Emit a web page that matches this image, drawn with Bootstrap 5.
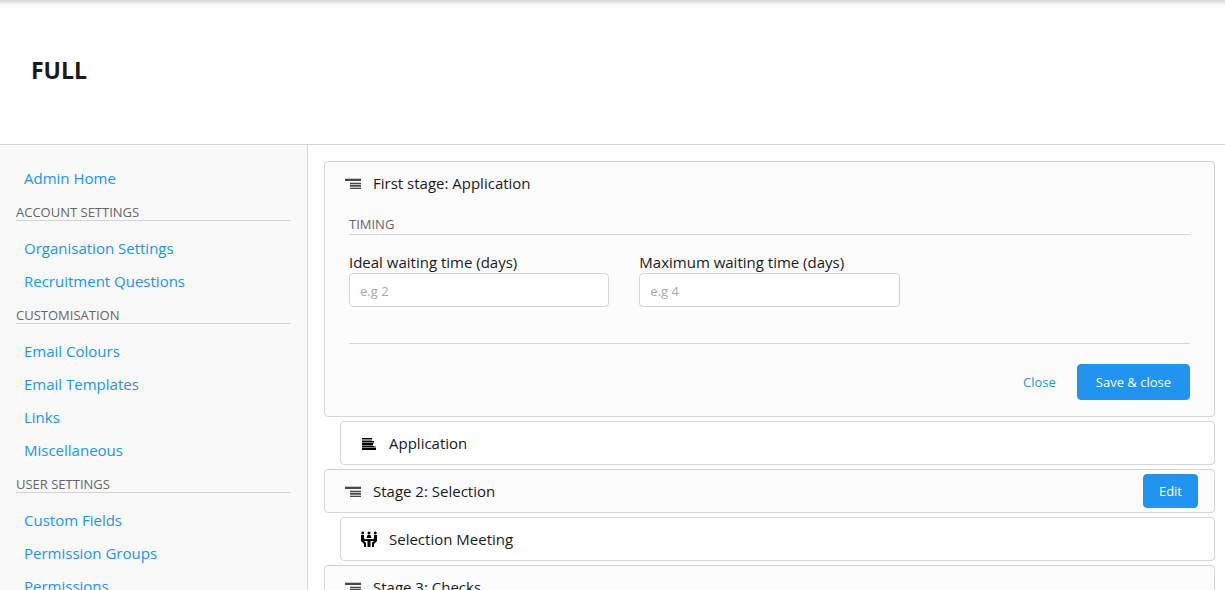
<!DOCTYPE html>
<html lang="en">
<head>
<meta charset="utf-8">
<meta name="viewport" content="width=device-width, initial-scale=1">
<title>Admin – Stages</title>
<link href="https://cdn.jsdelivr.net/npm/bootstrap@5.3.0/dist/css/bootstrap.min.css" rel="stylesheet">
<style>
  :root { --line: #d5d5d5; --blue: #2094ee; }
  body { font-family: "Open Sans", "Noto Sans", sans-serif; font-size: 15px; line-height: 21px; color: #1a1a1a; }
  .page-head { height: 145px; padding: 0 31px 4px; border-bottom: 1px solid var(--line); box-shadow: inset 0 6px 5px -4px #ccc; }
  .page-head h1 { font-size: 23px; line-height: 28px; font-weight: 700; }
  .side { flex: 0 0 308px; padding: 17px 16px; background: #f9f9f9; border-right: 1px solid var(--line); }
  .side .nav-link { padding: 6px 8px; color: var(--blue); }
  .section-title { font-size: 13px; line-height: 16px; font-weight: 400; color: #666; text-transform: uppercase; border-bottom: 1px solid var(--line); }
  .side .section-title { margin: 9px 0 11px; }
  .stage-body .section-title { padding-bottom: 2px; }
  .stages { padding: 16px 10px 0 16px; gap: 4px; }
  .stage { border: 1px solid var(--line); border-radius: 4px; background: #fcfcfc; }
  .step { margin-left: 16px; background: #fff; }
  .stage-head { height: 42px; padding: 0 16px 0 20px; gap: 12px; }
  .stage-head svg { width: 16px; height: 16px; flex: none; }
  .stage-body { padding: 12px 24px 16px; }
  .fields { --bs-gutter-x: 30px; padding: 17px 0 36px; }
  .stage .form-control { height: 34px; padding: 7px 10px 5px; font-size: 13px; border-color: var(--line); border-radius: 4px; }
  .stage .form-control::placeholder { color: #aaa; }
  .actions { border-top: 1px solid var(--line); padding-top: 20px; gap: 3px; }
  .stage .btn { font-size: 13px; line-height: 20px; padding: 7px 17px; border-radius: 4px; }
  .stage .btn-primary { padding: 7px 18px; }
  .stage .btn-edit { padding: 6px 15px; }
  .btn-primary { --bs-btn-bg: var(--blue); --bs-btn-border-color: var(--blue); }
  .btn-link { color: var(--blue); }
</style>
</head>
<body>
<svg class="d-none" aria-hidden="true">
  <symbol id="i-stage" viewBox="0 0 16 16"><path fill="#c8c8c8" d="M0 3h16v1H0zM5 7h11v7H5z"/><path fill="#484848" d="M0 4h16v2H0zM5 8h11v1H5zM5 10h11v1H5zM5 13h11v1H5z"/><path fill="#777" d="M5 11h11v1H5z"/></symbol>
  <symbol id="i-form" viewBox="0 0 16 16"><path fill="#888" d="M1 3h10v3h2v3h-1v2h3v4H1z"/><path d="M1 3h10v1H1zM1 6h12v1H1zM1 8h11v2H1zM1 11h12v1H1zM1 13h14v2H1z"/></symbol>
  <symbol id="i-meet" viewBox="0 0 16 16"><circle cx="1.7" cy="2" r="1.4"/><circle cx="8" cy="2" r="1.5"/><circle cx="14.3" cy="2" r="1.4"/><path d="M0 4h3v3.500l2 1v1.500H3l2 1.500V16H3v-3L0 10zM16 4h-3v3.500l-2 1v1.500h2l-2 1.500V16h2v-3l3-3zM6.500 4h3l1 3h-5zM5 8h6v2H9.500v6h-3v-6H5z"/></symbol>
</svg>
<div class="vh-100 overflow-hidden d-flex flex-column">
  <header class="page-head flex-shrink-0 d-flex align-items-center"><h1 class="m-0">FULL</h1></header>
  <div class="d-flex flex-grow-1">
    <nav class="side nav flex-column flex-nowrap" aria-label="Admin">
      <a class="nav-link" href="#">Admin Home</a>
      <h2 class="section-title">Account settings</h2>
      <a class="nav-link" href="#">Organisation Settings</a>
      <a class="nav-link" href="#">Recruitment Questions</a>
      <h2 class="section-title">Customisation</h2>
      <a class="nav-link" href="#">Email Colours</a>
      <a class="nav-link" href="#">Email Templates</a>
      <a class="nav-link" href="#">Links</a>
      <a class="nav-link" href="#">Miscellaneous</a>
      <h2 class="section-title">User settings</h2>
      <a class="nav-link" href="#">Custom Fields</a>
      <a class="nav-link" href="#">Permission Groups</a>
      <a class="nav-link" href="#">Permissions</a>
    </nav>
    <main class="stages flex-grow-1 d-flex flex-column">
      <form class="stage">
        <div class="stage-head d-flex align-items-center"><svg aria-hidden="true"><use href="#i-stage"/></svg>First stage: Application</div>
        <div class="stage-body">
          <h3 class="section-title m-0">Timing</h3>
          <div class="fields row">
            <div class="col-4"><label class="d-block" for="ideal">Ideal waiting time (days)</label><input class="form-control" id="ideal" placeholder="e.g 2"></div>
            <div class="col-4"><label class="d-block" for="max">Maximum waiting time (days)</label><input class="form-control" id="max" placeholder="e.g 4"></div>
          </div>
          <div class="actions d-flex justify-content-end">
            <button type="button" class="btn btn-link text-decoration-none">Close</button>
            <button type="button" class="btn btn-primary">Save &amp; close</button>
          </div>
        </div>
      </form>
      <div class="stage step"><div class="stage-head d-flex align-items-center"><svg aria-hidden="true"><use href="#i-form"/></svg>Application</div></div>
      <div class="stage"><div class="stage-head d-flex align-items-center"><svg aria-hidden="true"><use href="#i-stage"/></svg>Stage 2: Selection<button type="button" class="btn btn-primary btn-edit ms-auto">Edit</button></div></div>
      <div class="stage step"><div class="stage-head d-flex align-items-center"><svg aria-hidden="true"><use href="#i-meet"/></svg>Selection Meeting</div></div>
      <div class="stage"><div class="stage-head d-flex align-items-center"><svg aria-hidden="true"><use href="#i-stage"/></svg>Stage 3: Checks</div></div>
    </main>
  </div>
</div>
<script src="https://cdn.jsdelivr.net/npm/bootstrap@5.3.0/dist/js/bootstrap.bundle.min.js"></script>
</body>
</html>
